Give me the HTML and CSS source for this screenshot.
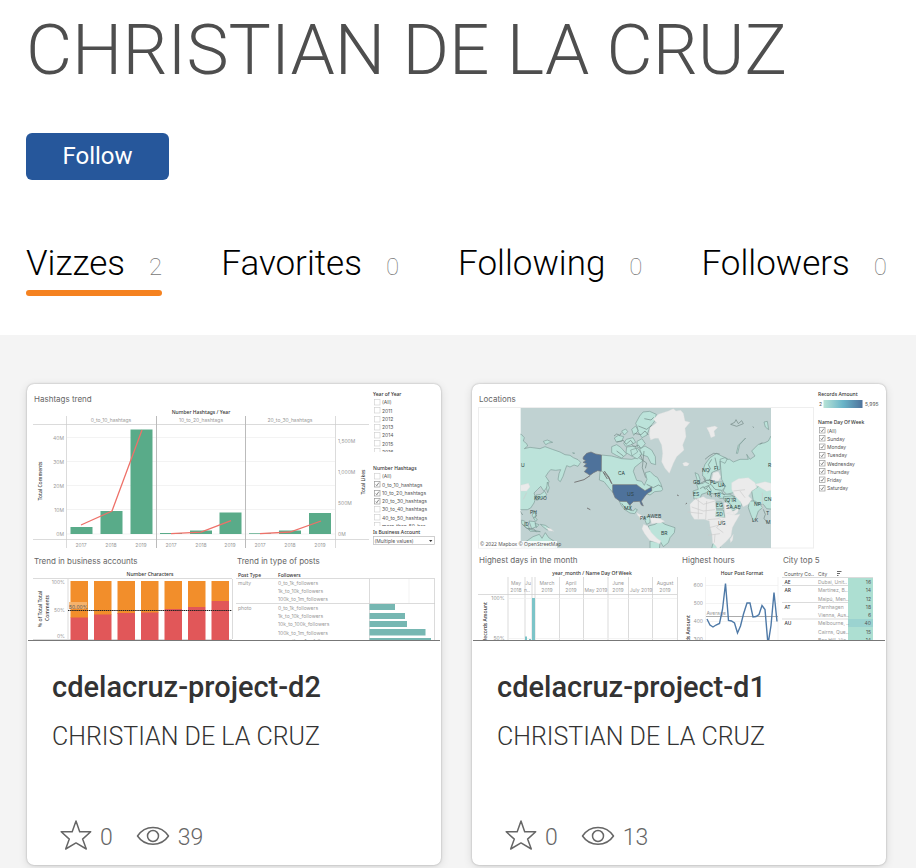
FILE: index.html
```html
<!DOCTYPE html>
<html lang="en">
<head>
<meta charset="utf-8">
<meta name="viewport" content="width=device-width, initial-scale=1">
<title>CHRISTIAN DE LA CRUZ</title>
<link rel="stylesheet" href="styles.css">
</head>
<body>
<header class="profile">
  <h1 class="name">CHRISTIAN DE LA CRUZ</h1>
  <button class="follow" type="button">Follow</button>
  <nav class="tabs">
    <a class="tab active" href="#vizzes">Vizzes <span class="count">2</span></a>
    <a class="tab" href="#favorites">Favorites <span class="count">0</span></a>
    <a class="tab" href="#following">Following <span class="count">0</span></a>
    <a class="tab" href="#followers">Followers <span class="count">0</span></a>
  </nav>
</header>
<main class="gallery" id="vizzes">
  <article class="card">
    <svg class="thumb" viewBox="27 384 414 257">
      <defs>
        <g id="box"><rect x=".5" y=".5" width="5.500" height="5.500" fill="#fff" stroke="#ccc" stroke-width=".6"/></g>
        <g id="tick"><rect x=".5" y=".5" width="5.500" height="5.500" fill="#fff" stroke="#999" stroke-width=".7"/><path d="M1.800 3.500l1 1.200 2-3" fill="none" stroke="#555" stroke-width=".7"/></g>
      </defs>
      <text class="head" x="34" y="402">Hashtags trend</text>
      <text class="strong" x="201" y="414" text-anchor="middle">Number Hashtags / Year</text>
      <g class="pale" text-anchor="middle">
        <text x="111" y="422">0_to_10_hashtags</text><text x="201" y="422">10_to_20_hashtags</text><text x="290" y="422">20_to_30_hashtags</text>
        <text x="81" y="547">2017</text><text x="111" y="547">2018</text><text x="141" y="547">2019</text>
        <text x="171" y="547">2017</text><text x="201" y="547">2018</text><text x="230" y="547">2019</text>
        <text x="260" y="547">2017</text><text x="290" y="547">2018</text><text x="320" y="547">2019</text>
      </g>
      <g class="pale" text-anchor="end">
        <text x="64" y="440">40M</text><text x="64" y="464">30M</text><text x="64" y="488">20M</text><text x="64" y="512">10M</text><text x="64" y="536">0M</text>
      </g>
      <g class="pale"><text x="338" y="443">1,500M</text><text x="338" y="474">1,000M</text><text x="338" y="505">500M</text><text x="338" y="536">0M</text></g>
      <path class="faint" d="M67 437.500H335M67 461.500H335M67 485.500H335M67 509.500H335M67 534H335"/>
      <path class="rule" d="M33 424.500H369M33 539.500H369M66.500 416V548M335.500 416V548"/>
      <path class="rule dark" d="M156.500 416V548M245.500 416V548"/>
      <path fill="#59ab89" d="M70.500 527h22v7h-22zM100.500 511h22v23h-22zM130.500 429.500h22V534h-22zM160 533h22v1h-22zM190 530.500h22v3.500h-22zM219.500 512.500h22V534h-22zM249 533.200h22v.8h-22zM279 530.500h22v3.500h-22zM309 513h22v21h-22z"/>
      <path class="trend" d="M81 525l31-14 30-81M171 533.700l30-1.500 30-11.500M260 533.700l30-1.700 31-11"/>
      <text class="strong" transform="translate(42 481) rotate(-90)" text-anchor="middle">Total Comments</text>
      <text class="strong" transform="translate(364.500 482) rotate(-90)" text-anchor="middle">Total Likes</text>
      <text class="strong" x="373" y="396">Year of Year</text>
      <g class="label">
        <text x="382" y="404">(All)</text><text x="382" y="412.500">2011</text><text x="382" y="421">2012</text><text x="382" y="429">2013</text><text x="382" y="437">2014</text><text x="382" y="445.500">2015</text>
      </g>
      <g><use href="#box" x="374" y="399"/><use href="#box" x="374" y="407"/><use href="#box" x="374" y="416"/><use href="#box" x="374" y="424"/><use href="#box" x="374" y="432"/><use href="#box" x="374" y="440"/></g>
      <svg x="373" y="448" width="30" height="4" viewBox="373 448 30 4"><use href="#box" x="374" y="448"/><text class="label" x="382" y="454">2016</text></svg>
      <text class="strong" x="373" y="470">Number Hashtags</text>
      <g class="label">
        <text x="382" y="478">(All)</text><text x="382" y="486.500">0_to_10_hashtags</text><text x="382" y="495">10_to_20_hashtags</text><text x="382" y="503">20_to_30_hashtags</text><text x="382" y="511">30_to_40_hashtags</text><text x="382" y="519.500">40_to_50_hashtags</text>
      </g>
      <g><use href="#box" x="374" y="473"/><use href="#tick" x="374" y="481"/><use href="#tick" x="374" y="490"/><use href="#tick" x="374" y="498"/><use href="#box" x="374" y="506"/><use href="#box" x="374" y="514"/></g>
      <svg x="373" y="522" width="60" height="4" viewBox="373 522 60 4"><use href="#box" x="374" y="522"/><text class="label" x="382" y="528">more_than_50_has..</text></svg>
      <text class="strong" x="373" y="534">Is Business Account</text>
      <rect x="373.500" y="536.500" width="61" height="8" fill="#fff" stroke="#bbb" stroke-width=".7"/>
      <text class="label" x="374.500" y="542.500">(Multiple values)</text>
      <path d="M429 540h3.400l-1.700 2z" fill="#333"/>

      <text class="head" x="34" y="564">Trend in business accounts</text>
      <text class="strong" x="150" y="576" text-anchor="middle">Number Characters</text>
      <path class="rule" d="M33 578.500H232M68 579V639M232.500 579V639M33 639.500H232"/>
      <g class="pale" text-anchor="end"><text x="65" y="584">100%</text><text x="65" y="612">50%</text><text x="65" y="638">0%</text></g>
      <path fill="#f28e2b" d="M70.500 581h17.500v37h-17.500zM94 581h17.500v34H94zM117.500 581H135v33h-17.500zM141 581h17.500v32H141zM164.500 581H182v28h-17.500zM188 581h17.500v26H188zM211.500 581H229v20h-17.500z"/>
      <path fill="#e15759" d="M70.500 617.500h17.500V640h-17.500zM94 614.500h17.500V640H94zM117.500 613H135v27h-17.500zM141 612.500h17.500V640H141zM164.500 609H182v31h-17.500zM188 607h17.500v33H188zM211.500 601H229v39h-17.500z"/>
      <rect x="69" y="602" width="18" height="7" fill="#f6b878" opacity=".85"/>
      <text class="label" x="69" y="608.500">50.00%</text>
      <path d="M68 610.500H232" stroke="#222" stroke-width="1" stroke-dasharray="1.500 .6"/>
      <text class="strong" transform="translate(42 609) rotate(-90)" text-anchor="middle">% of Total Total</text>
      <text class="strong" transform="translate(49 608) rotate(-90)" text-anchor="middle">Comments</text>

      <text class="head" x="237" y="564">Trend in type of posts</text>
      <text class="strong" x="238" y="576.500">Post Type</text><text class="strong" x="278" y="576.500">Followers</text>
      <path class="rule" d="M236 578.500H435M236 603.500H435M369.500 579V640M434.500 579V640"/>
      <path class="faint" d="M409 579V603"/>
      <g class="pale">
        <text x="238" y="584.500">multy</text><text x="238" y="609.500">photo</text>
        <text x="278" y="584.500">0_to_1k_followers</text><text x="278" y="593">1k_to_10k_followers</text><text x="278" y="601">100k_to_1m_followers</text>
        <text x="278" y="609.500">0_to_1k_followers</text><text x="278" y="618">1k_to_10k_followers</text><text x="278" y="626">10k_to_100k_followers</text><text x="278" y="634.500">100k_to_1m_followers</text><text x="278" y="642.500">more_than_1m_follo..</text>
      </g>
      <path fill="#76b7b2" d="M369.500 604h25.500v6h-25.500zM369.500 613H405v6h-35.500zM369.500 621H407v6h-37.500zM369.500 629h56v6.500h-56zM369.500 638H431v3h-61.500z"/>
      <path class="edge" d="M28 640.500H440"/>
    </svg>
    <div class="info">
      <h2 class="title">cdelacruz-project-d2</h2>
      <a class="author" href="#author">CHRISTIAN DE LA CRUZ</a>
      <div class="stats">
        <svg class="star" viewBox="0 0 32 30"><path d="M16 1l3.700 10.800h11l-8.100 7.300 3.700 9.900L16 22.900 5.700 29l3.600-9.900-8.100-7.300h11z"/></svg>
        <span class="stat">0</span>
        <svg class="eye" viewBox="0 0 34 20"><path d="M1.500 10C9-1.500 25-1.500 32.500 10 25 21 9 21 1.500 10z"/><circle cx="17" cy="10" r="5.500"/></svg>
        <span class="stat">39</span>
      </div>
    </div>
  </article>

  <article class="card">
    <svg class="thumb" viewBox="472 384 414 257">
      <text class="head" x="479" y="402">Locations</text>
      <rect x="478.500" y="407.500" width="335" height="140.500" fill="#fff" stroke="#eee"/>
      <svg x="520.500" y="408" width="250.500" height="140" viewBox="166.500 96 751.500 420">
        <path fill="#c0d2d2" d="M166 96h753v421H166z"/>
        <g class="land">
          <path d="M160 172l10 4 8 9-3 10 10 8 3 7-10 8 17-4 30 4 15-6 22 8 23 8 15 8 15 2 10 7 14 6 8 8-8 12-12-4-12 6-10-4-5 14-6 18-8 16-7-6 3-18 5-12-15 2-15-2-7 8-8 12 10 15-5 15-10 15-10-15-10 10-10 10 5 15-5 15-10 15-10 5h-25z"/>
          <path d="M235 196l12-4 16 7-12 2-9 5zM323 230l6 1-3 3zM247 318l6 17-5 15-3-12zM213 357l14-2 12-9 6 10-8 11-12 2-10 4z"/>
          <path d="M409 237l31 3 30 8 30 2 20-6 14 10-25 20-4 12 10 27 15 3 8 12 8-18-5-20 14-4 14 14 8 4 10 18 6 18-4 5-20 2-14 10-18-6h-92l-12-14-16-20-14-5z"/>
          <path d="M440 212l15-6 12 8 18 20-15 12-16-8-14-8zM448 186l12-8 16 4-6 14-16 2zM484 190l20-5 8 14-16 8-14 4-6-9zM485 213l25-3 8 18-18 12-17-10zM500 160l12-10 8 14-14 14zM512 142l12-22 10-12 20-2 20 9-5 20-15 20-8 22-15 8-12-18-2-14zM516 196l15-8 10 15-12 14-12-4zM524 218l16-8 20 12 11 20 1 24-14-4-10-20-18-6zM497 222l20-6 14 18-14 15-16-9zM470 165l12-6 6 8-10 10z"/>
          <path d="M462 374l25 3 10 12-2 12 10 4 5-7 7 3-8 12-14-2-17-11-9-12zM178 500l26-18 19-7 8 12 10-17 10 15 20 13 2 25H180z"/>
          <path d="M205 405l8 6-3 12 7 9-5 4-10-17zM170 432l10 4 15 24-10-3-15-15zM192 435l18 2 4 15-14 6zM210 442l12 4-8 9zM190 460l22 4 14 3-30-1zM226 445l15 3 10 7 12 9-18-3-10-8z"/>
          <path d="M713 285l7-20 15-20 20-13 15 8 17 8-7 14-15-7v25l-15 5-10 5-5 20-10 10-5-15-7-5zM765 250l15-5 7 5 7 0 11 8 20-8 25 0-5-15 10 15 15-10-10-15 10-10 10-10 20-5 10-5 8-15h12v180l-43-3-22-7-10-15-30 3-20 12-20 5-10-10 5-15-10-20zM814 232l6-24 22-22-18 20-6 26zM897 138l10-2 4 25-10-8z"/>
          <path d="M690 290l10 5 5 15-2 12-13-2 6-10zM684 345l16-5-5-15 20-3 10-10 25 6h20l13 12-13 15 5 10 20 0 15 8-8 4h-37l-15-12-15-5 5 13-15-13-15 5-5 12-18 2zM775 362l25-2 25 5 5 20-7 15-23 5-13-20-10-15zM753 378h17l5 20h-22zM750 402h25l5 23-30-3z"/>
          <path d="M860 345l15-10 15-10 35 20v55l-20-2-10-13-15 0-15-10zM853 375h17l15 10 8 10-13 10-7 20-8 10-8-20-7-20z"/>
          <path d="M550 450l20-5 15-10 15 10 30 10-2 15-13 15-5 15-15 12-10-17-15-10-15-15zM555 495l30 5-2 20h-28zM537 425l18-5v20l-10 5zM743 505l12-10 10-15 3 10-3 28h-25z"/>
        </g>
        <g class="blank">
          <path d="M555 155l20-15-10-10 15-15 30-10 15-7 8 7 14-2 8 9 5 23 15 4-15 18 3 25-10 25 4 15-22 20-10 20-12 30-13-15-10-20 3-25-3-25-10-20h-10l-13 5-4-15zM653 262l10-4 10 5-6 7h-10zM725 155l25-5 8 5-11 10 3 15-12 5-5-15z"/>
          <path d="M166 328l24-6 5 10-10 13h-19zM800 320l20-12 30-3 20 15 5 15-15 10-10 15 10 10-10 15-15 7-10-17-15-15-10-20zM870 325l30-8 20 5v20l-15 4zM745 290l15-3 7 15-7 13-20-2z"/>
          <path d="M675 385l15-15 25-8 10 6 25 4 3 30-2 20 30 3-4-45h8l17 25 8 12 15-2-15 25-8 15-4 25-13 15-14 13-13 12-5-10-10-10-2-25-5-20-3-20-15-5h-30l-10-15-2-15zM795 490l10-15-2 17-6 8zM785 412l23-8 14-10-4 15-10 8zM536 445l12 6 12 20 15 15 13 9-4 8-30-10-15-20-8-15zM555 423l30 5 14 8-12 5-15 0-12 2z"/>
          <path d="M515 410l14 8 8 10-7 2-12-12zM245 455l13 3 8 8-15-2z"/>
        </g>
        <path class="borders" d="M687 365l28 20 35-10M680 393l35 12 35-4M700 370v58M725 375l-3 56M728 431l35-3 20 20M733 455l30-8M730 478l35-5M748 500l2-25M775 430l-20 25 20 15M668 408l45 5M805 345l35-4M825 345l15 20M185 350l-10 20M892 350v50"/>
        <g fill="#4e729b" stroke="#777" stroke-width="2">
          <path d="M355 243l10-11 13-4 14 6 17 3v49l-11-2-12 6-11 8-9-6-8-5 10-12-12-4 9-8-11-4 8-5-8-5z"/>
          <path d="M443 326h72l10 8 15 10 20-11v12l-14 8-8 10-9 13 6 14-6-3-5-11-19 1-11 11-9-12h-20l-15-11-7-18z"/>
        </g>
        <path d="M328 319l29-8 18-12M413 287l14 12 14 25M418 285l14 19 8 18M366 396l10 5M636 357l5 2M662 384l4-3M415 290l12 19" fill="none" stroke="#777" stroke-width="3"/>
        <path class="cluster" d="M797 145l12-6 4-8 7 12 10-9 5 9-20 8zM863 152l4 3M884 205l8-5M455 198l20-5 8 12 14-12 8 10M508 172l20 4 12-11 10 12M520 150l25 10 15-12M537 225l-5 50 10 30M538 128l20 4 8-8M455 225l20 15M447 180l8-6 10 4 4-8M500 205l8 8 12-6 6 8M525 235l8 18 12 8-4 16M716 305l6 14 10 4M700 325l20-10 16-4 10 12 15-5M705 338l10-6 6 8 10-10 8 14M716 335l22-10 12 15 20 3M725 338l14 14-4 6M740 250l-10 16 6 12-8 14M750 245l8 35M545 325l20 10 15-8 10 5M720 250l12-10 14-8 18 2M750 355l14-6 16 8M785 375l12 10 10 15M210 360l10 6 10-4M172 445l14 12 20 2 8 8M210 408l5 12-10 6M470 382l10 14 20 8M895 400l6 15-4 12 10 14M165 405l8 12"/>
      </svg>
      <g class="country">
        <text x="521" y="467">U</text><text x="618" y="475">CA</text><text x="627" y="496">US</text><text x="624" y="510">MX</text><text x="647" y="518">AWEB</text><text x="661" y="535">BR</text><text x="534" y="500">KPJO</text><text x="530" y="514">PH</text><text x="524" y="526">ID</text><text x="640" y="520">PA</text>
        <text x="702" y="472">NO</text><text x="714" y="470">FI</text><text x="710" y="484">PL</text><text x="718" y="487">UA</text><text x="693" y="484">GB</text><text x="693" y="496">ES</text><text x="707" y="495">IT</text><text x="714" y="497">TR</text><text x="725" y="502">IQ IR</text><text x="716" y="507">EG</text><text x="726" y="509">SA AE</text><text x="716" y="516">SD</text><text x="718" y="525">UG</text><text x="754" y="506">NP</text><text x="764" y="501">CN</text><text x="752" y="522">LK</text><text x="766" y="515">T</text><text x="766" y="524">M</text><text x="768" y="467">R</text>
      </g>
      <rect x="479" y="541" width="78" height="7" fill="#fff" opacity=".85"/>
      <text class="legal" x="480" y="546">© 2022 Mapbox © OpenStreetMap</text>
      <defs><linearGradient id="scale"><stop stop-color="#b8e3d6"/><stop offset=".5" stop-color="#68b4c8"/><stop offset="1" stop-color="#4e729b"/></linearGradient></defs>
      <text class="strong" x="818" y="396">Records Amount</text>
      <text class="label" x="819" y="405.500">2</text><rect x="823.500" y="400" width="39" height="8" fill="url(#scale)"/><text class="label" x="865" y="405.500">5,995</text>
      <text class="strong" x="818" y="424">Name Day Of Week</text>
      <g class="label">
        <text x="827" y="432.500">(All)</text><text x="827" y="440.500">Sunday</text><text x="827" y="449">Monday</text><text x="827" y="457">Tuesday</text><text x="827" y="465.500">Wednesday</text><text x="827" y="473.500">Thursday</text><text x="827" y="482">Friday</text><text x="827" y="490">Saturday</text>
      </g>
      <g><use href="#tick" x="819" y="427"/><use href="#tick" x="819" y="435"/><use href="#tick" x="819" y="443.500"/><use href="#tick" x="819" y="452"/><use href="#tick" x="819" y="460"/><use href="#tick" x="819" y="468"/><use href="#tick" x="819" y="476.500"/><use href="#tick" x="819" y="485"/></g>

      <text class="head" x="479" y="563">Highest days in the month</text>
      <text class="strong" x="592" y="575" text-anchor="middle">year_month / Name Day Of Week</text>
      <path class="rule" d="M508 577V640M525 577V640M532 577V640M535 577V640M559.500 577V640M583.500 577V640M608 577V640M628.500 577V640M652.500 577V640M677.500 577V640M478 594.500H677"/>
      <path class="faint" d="M508 598.500H677M508 638.500H677"/>
      <g class="pale" text-anchor="middle">
        <text x="516" y="585">May</text><text x="516" y="592">2018</text><text x="528" y="585">Ju</text><text x="527" y="592">n..</text><text x="547" y="585">March</text><text x="547" y="592">2019</text><text x="571" y="585">April</text><text x="571" y="592">2019</text><text x="596" y="592">May 2019</text><text x="618" y="585">June</text><text x="618" y="592">2019</text><text x="641" y="592">July 2019</text><text x="665" y="585">August</text><text x="665" y="592">2019</text>
        <text x="498" y="600">100%</text><text x="499" y="640">50%</text>
      </g>
      <path fill="#7cc4c8" d="M532 598h3v42h-3zM525 636.500h2v4h-2zM529 639h2v1h-2z"/>
      <text class="strong" transform="translate(487 622) rotate(-90)" text-anchor="middle">Records Amount</text>

      <text class="head" x="682" y="563">Highest hours</text>
      <text class="strong" x="742" y="575" text-anchor="middle">Hour Post Format</text>
      <g class="pale" text-anchor="end"><text x="703" y="587">600</text><text x="703" y="605">500</text><text x="703" y="623">400</text><text x="703" y="641">300</text></g>
      <path class="faint" d="M705.500 577V640M778 577V640M705 585.500H778M705 603.500H778M705 621.500H778"/>
      <text class="pale" x="706.500" y="615">Average</text>
      <path d="M706 616.500H778" stroke="#888" stroke-width=".7"/>
      <path fill="none" stroke="#4e79a7" stroke-width="1.400" d="M707 619l3 6 3 2 3-2 3.500-1.500 3-14 3-26 3 37 3 .5 3 2 3 10 3-7 3-12 3.500-11h3l3 14 3-.5 3-2 3-9 3 4 3 35 3-19 3-33 3 29"/>
      <text class="strong" transform="translate(690 635) rotate(-90)" text-anchor="middle">Records Amount</text>

      <text class="head" x="783" y="563">City top 5</text>
      <text class="label" x="784" y="575.500">Country Co..</text><text class="label" x="818" y="575.500">City</text>
      <path d="M837 571.500h4.500M837 573.500h3M837 575.500h1.500" stroke="#444" stroke-width=".8"/>
      <path class="rule" d="M782 577.500H873M782 585.500H873M782 602.500H873M782 619H873"/>
      <path fill="#addfd2" d="M848 578h25v41h-25zM848 627h25v14h-25z"/><path fill="#9bd3d0" d="M848 619h25v8h-25z"/>
      <g class="strong"><text x="784.500" y="584">AE</text><text x="784.500" y="592">AR</text><text x="784.500" y="608.500">AT</text><text x="784.500" y="625">AU</text></g>
      <g class="pale"><text x="818" y="584">Dubai, Unit..</text><text x="818" y="592">Martínez, B..</text><text x="818" y="600.500">Maipú, Men..</text><text x="818" y="608.500">Parnhagen</text><text x="818" y="617">Vienna, Aus..</text><text x="818" y="625">Melbourne, ..</text><text x="818" y="633.500">Cairns, Que..</text><text x="818" y="641.500">Box Hill, Vic..</text></g>
      <g class="label" text-anchor="end"><text x="871" y="584">16</text><text x="871" y="592">14</text><text x="871" y="600.500">12</text><text x="871" y="608.500">18</text><text x="871" y="617">6</text><text x="871" y="625">40</text><text x="871" y="633.500">15</text><text x="871" y="641.500">14</text></g>
      <path class="edge" d="M473 640.500H885"/>
    </svg>
    <div class="info">
      <h2 class="title">cdelacruz-project-d1</h2>
      <a class="author" href="#author">CHRISTIAN DE LA CRUZ</a>
      <div class="stats">
        <svg class="star" viewBox="0 0 32 30"><path d="M16 1l3.700 10.800h11l-8.100 7.300 3.700 9.900L16 22.900 5.700 29l3.600-9.900-8.100-7.300h11z"/></svg>
        <span class="stat">0</span>
        <svg class="eye" viewBox="0 0 34 20"><path d="M1.500 10C9-1.500 25-1.500 32.500 10 25 21 9 21 1.500 10z"/><circle cx="17" cy="10" r="5.500"/></svg>
        <span class="stat">13</span>
      </div>
    </div>
  </article>
</main>
</body>
</html>
```
FILE: styles.css
```css
* { box-sizing: border-box; }
body { margin: 0; background: #f4f4f4; color: #333; font-family: Roboto, "Liberation Sans", sans-serif; font-weight: 300; }
.profile { background: #fff; padding: 10px 29px 39px 26px; }
.name { margin: 0 0 43px; color: #4e4e4e; font-size: 71px; line-height: 80px; font-weight: 300; white-space: nowrap; }
.follow { display: block; min-width: 143px; height: 47px; padding: 0 32px; border: 0; border-radius: 6px; background: #26579b; color: #fff; font: 400 24px/47px Roboto, sans-serif; }
.tabs { display: flex; justify-content: space-between; margin-top: 60px; }
.tab { position: relative; display: flex; align-items: baseline; gap: 24px; height: 56px; color: #000; font-size: 35px; line-height: 47px; text-decoration: none; white-space: nowrap; }
.active::after { content: ""; position: absolute; left: 0; right: 0; bottom: 0; height: 6px; border-radius: 3px; background: #f58220; }
.count { color: #777; font-size: 24px; font-weight: 100; }
.gallery { display: grid; grid-template-columns: 1fr 1fr; gap: 31px; padding: 49px 30px 3px 27px; }
.card { overflow: hidden; border-radius: 7px; background: #fff; box-shadow: 0 0 2px rgba(0, 0, 0, .3), 0 2px 10px rgba(0, 0, 0, .12); }
.thumb { display: block; width: 100%; font-family: Inter, "Noto Sans", sans-serif; font-weight: 400; }
.head { font-size: 8px; fill: #666; }
.strong { font-family: "Noto Sans", sans-serif; font-size: 5px; font-weight: 500; fill: #333; }
.label { font-size: 5px; fill: #555; }
.legal { font-family: "Noto Sans", sans-serif; font-size: 5px; fill: #555; }
.pale { font-size: 5px; fill: #999; }
.country { font-size: 5px; fill: #2f4545; }
.rule { fill: none; stroke: #ccc; stroke-width: .7; }
.dark { stroke: #bbb; stroke-width: 1; }
.faint { fill: none; stroke: #eee; stroke-width: .7; }
.trend { fill: none; stroke: #ee7169; stroke-width: 1.3; }
.edge { stroke: #777; stroke-width: 1; }
.land { fill: #bce3da; stroke: #809d98; stroke-width: 2; }
.blank { fill: #ebebeb; stroke: #ddd; stroke-width: 1; }
.borders { fill: none; stroke: #ccc; stroke-width: 2; }
.cluster { fill: none; stroke: #718783; stroke-width: 2; }
.info { padding: 28px 25px 11px; }
.title { margin: 0 0 14px; font-size: 29px; line-height: 36px; font-weight: 500; }
.author { display: block; color: #333; font-size: 25px; line-height: 36px; text-decoration: none; }
.stats { display: flex; align-items: center; height: 36px; margin-top: 63px; padding-left: 8px; color: #666; }
.stats svg { fill: none; stroke: #666; stroke-width: 1.5; stroke-linejoin: round; }
.star { width: 32px; height: 30px; margin-bottom: 3px; }
.eye { width: 34px; height: 20px; }
.stat { font-size: 23px; line-height: 28px; margin: 4px 23px 0 8px; }
```
